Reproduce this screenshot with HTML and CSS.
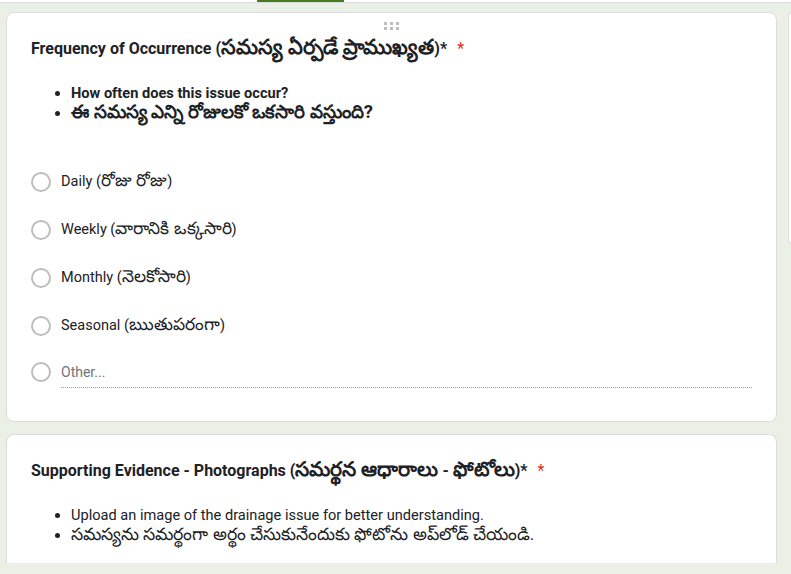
FILE: index.html
```html
<!DOCTYPE html>
<html lang="en">
<head>
<meta charset="utf-8">
<link rel="stylesheet" href="styles.css">
</head>
<body>
<div class="topbar"><div class="tab-indicator"></div></div>
<div class="page">
  <div class="column">
    <div class="card card-q">
      <div class="drag"><span></span><span></span><span></span><span></span><span></span><span></span></div>
      <div class="title">Frequency of Occurrence (<span class="te te-wide">సమస్య ఏర్పడే ప్రాముఖ్యత</span>)* <span class="req">*</span></div>
      <ul class="desc bold">
        <li>How often does this issue occur?</li>
        <li><span class="te">ఈ సమస్య ఎన్ని రోజులకో ఒకసారి వస్తుంది?</span></li>
      </ul>
      <div class="options">
        <div class="opt"><span class="radio"></span><span class="lbl">Daily (<span class="te">రోజు రోజు</span>)</span></div>
        <div class="opt"><span class="radio"></span><span class="lbl">Weekly (<span class="te">వారానికి ఒక్కసారి</span>)</span></div>
        <div class="opt"><span class="radio"></span><span class="lbl">Monthly (<span class="te">నెలకోసారి</span>)</span></div>
        <div class="opt"><span class="radio"></span><span class="lbl">Seasonal (<span class="te">ఋతుపరంగా</span>)</span></div>
        <div class="opt other"><span class="radio"></span><span class="other-field">Other...</span></div>
      </div>
    </div>
    <div class="card card-b">
      <div class="title">Supporting Evidence - Photographs (<span class="te">సమర్థన ఆధారాలు</span> - <span class="te">ఫోటోలు</span>)* <span class="req">*</span></div>
      <ul class="desc plain">
        <li>Upload an image of the drainage issue for better understanding.</li>
        <li><span class="te">సమస్యను సమర్థంగా అర్థం చేసుకునేందుకు ఫోటోను అప్‌లోడ్ చేయండి.</span></li>
      </ul>
    </div>
  </div>
  <div class="sidebar"></div>
</div>
</body>
</html>
```
FILE: styles.css
```css
html, body {
  margin: 0;
  padding: 0;
}
body {
  background: #ebf0e7;
  font-family: Roboto, "Noto Sans", "Liberation Sans", sans-serif;
  color: #202124;
  width: 791px;
  height: 574px;
  overflow: hidden;
}
.topbar {
  height: 2px;
  background: #ffffff;
  border-bottom: 1px solid #dadce0;
  position: relative;
}
.tab-indicator {
  position: absolute;
  left: 257px;
  top: 0;
  width: 87px;
  height: 2px;
  background: #477b1e;
}
.page {
  display: flex;
  gap: 11px;
  padding: 9px 0 0 6px;
  align-items: flex-start;
}
.column {
  width: 771px;
  flex: none;
  display: flex;
  flex-direction: column;
  gap: 12px;
}
.card {
  background: #fff;
  border: 1px solid #dadce0;
  border-radius: 8px;
  box-sizing: border-box;
  position: relative;
}
.card-q {
  height: 410px;
  padding: 24px 24px 0 24px;
}
.card-b {
  height: 129px;
  border-bottom: none;
  border-radius: 8px 8px 0 0;
  padding: 24px 24px 0 24px;
}
.sidebar {
  width: 3px;
  height: 232px;
  flex: none;
  background: #fff;
  border: 1px solid #dadce0;
  border-right: none;
  border-radius: 8px 0 0 8px;
  box-sizing: border-box;
}
.drag {
  position: absolute;
  left: 377px;
  top: 9px;
  width: 15px;
  display: grid;
  grid-template-columns: repeat(3, 3px);
  column-gap: 3px;
  row-gap: 2px;
}
.drag span {
  width: 3px;
  height: 3px;
  background: #bdbdbd;
}
.te {
  font-size: 1.26em;
  line-height: 0;
}
.te.te-wide {
  font-size: 1.3em;
}
.title {
  font-size: 16px;
  font-weight: 700;
  line-height: 24px;
  letter-spacing: 0;
}
.req {
  color: #d93025;
  font-weight: 400;
  margin-left: 6px;
}
.desc {
  margin: 22px 0 0 0;
  padding-left: 40px;
  font-size: 14.6px;
  line-height: 20px;
}
.desc.bold {
  font-weight: 700;
}
.desc.plain .te {
  font-size: 1.19em;
}
.options {
  margin-top: 47px;
  display: flex;
  flex-direction: column;
  gap: 24px;
}
.opt {
  display: flex;
  align-items: center;
  height: 24px;
}
.radio {
  width: 16px;
  height: 16px;
  border: 2px solid #bdbdbd;
  border-radius: 50%;
  flex: none;
}
.lbl {
  margin-left: 10px;
  font-size: 14.5px;
  line-height: 20px;
}
.lbl .te {
  font-size: 1.18em;
}
.opt.other {
  align-items: flex-start;
}
.other-field {
  margin-left: 10px;
  flex: 1;
  font-size: 14px;
  line-height: 20px;
  color: #70757a;
  border-bottom: 1px dotted #9aa0a6;
  padding: 0 0 5px 0;
  margin-right: 0;
}
```
